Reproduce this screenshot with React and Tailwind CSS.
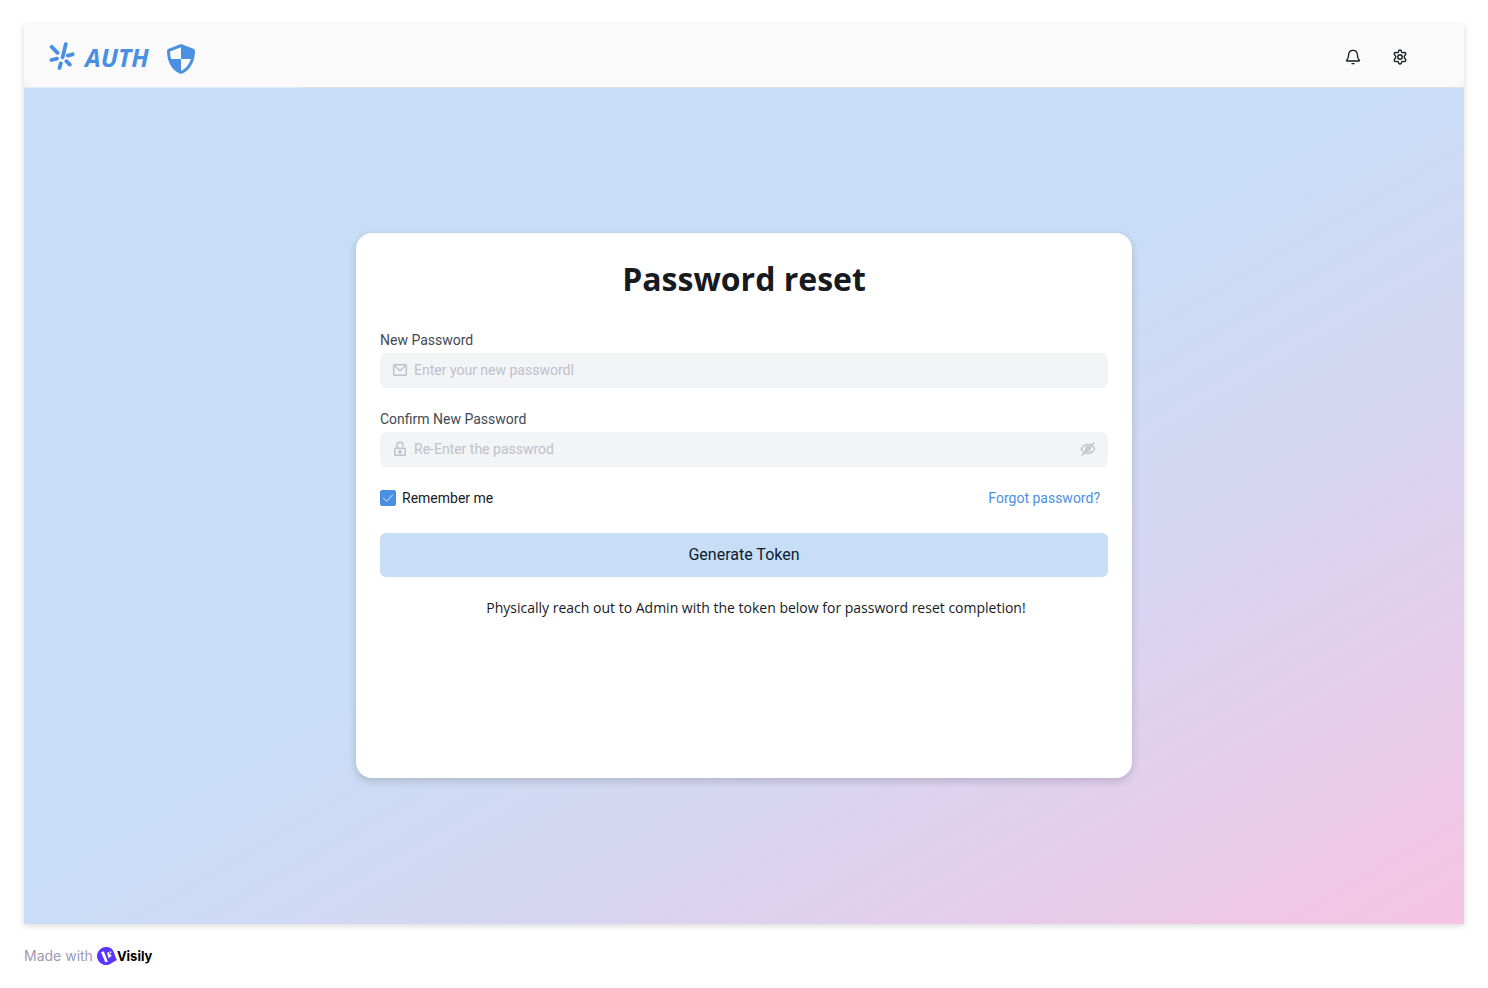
import { useState } from "react";

const openSans = "font-['Open_Sans',sans-serif]";

function SparkLogo() {
  return (
    <svg width="26" height="30" viewBox="0 0 26 30" fill="none" stroke="currentColor" strokeWidth="3.8" strokeLinecap="round" aria-hidden="true">
      <path d="M2.700 4.800 8.600 10.800M16.800 2.200 13.600 15.400M18.800 13.600l4.800-1.300M2.500 18l5.500-1.400M11.800 21.400l-1.300 4.600M17.400 19.200l3.400 3.400" />
    </svg>
  );
}

function ShieldLogo() {
  return (
    <svg width="28" height="30" viewBox="0 0 28 30" aria-hidden="true">
      <path
        fill="currentColor"
        fillRule="evenodd"
        d="M14 0 26.3 4.8C27.3 5.2 28 6 28 7c0 9.500-4 18.500-12.500 22.500a3.500 3.500 0 0 1-3 0C4 25.500 0 16.500 0 7c0-1 .7-1.800 1.700-2.200zM14 3.200 3 7.400c0 2.800.4 5.300 1.200 7.600H14zM14 15v12c5.200-2.600 8.400-7 9.900-12z"
      />
    </svg>
  );
}

function Icon({ size = 16, width = 1.5, children, className = "" }) {
  return (
    <svg width={size} height={size} viewBox="0 0 16 16" fill="none" stroke="currentColor" strokeWidth={width} strokeLinecap="round" strokeLinejoin="round" className={className} aria-hidden="true">
      {children}
    </svg>
  );
}

function Bell() {
  return (
    <Icon width={1.3}>
      <path d="M8 1.300c2.700 0 4.300 2 4.400 4.500.1 2.700.7 4.400 1.900 5.200.5.400.3 1-.3 1H2c-.6 0-.8-.6-.3-1 1.200-.8 1.800-2.500 1.900-5.200C3.700 3.300 5.300 1.300 8 1.300zM7 14.700h2" />
    </Icon>
  );
}

function Gear() {
  return (
    <Icon width={1.4}>
      <path d="M6.900 1.500c.3-.6 1.900-.6 2.200 0l.7 1.600c.2.400.6.600 1 .500l1.800-.2c.7 0 1.400 1.300 1.100 1.900l-1.100 1.500c-.3.400-.3 2 0 2.400l1.100 1.500c.3.600-.4 1.900-1.100 1.900l-1.800-.2c-.4-.1-.8.1-1 .5l-.7 1.600c-.3.600-1.900.6-2.200 0l-.7-1.600c-.2-.4-.6-.6-1-.5l-1.800.2c-.7 0-1.400-1.300-1.100-1.900l1.100-1.500c.3-.4.3-2 0-2.400L2.300 5.300c-.3-.6.4-1.900 1.100-1.900l1.800.2c.4.100.8-.1 1-.5z" />
      <circle cx="8" cy="8" r="2.200" />
    </Icon>
  );
}

function Mail() {
  return (
    <Icon>
      <rect x="1.700" y="2.700" width="12.600" height="10.600" rx="0.800" />
      <path d="m3.200 4.300 4.800 4.400 4.800-4.400" />
    </Icon>
  );
}

function Lock() {
  return (
    <Icon>
      <rect x="2.700" y="7.200" width="10.600" height="7" rx="0.800" />
      <path d="M5 7V4.300a3 3 0 0 1 6 0V5" />
      <circle cx="8" cy="10.700" r="1.100" fill="currentColor" />
    </Icon>
  );
}

function EyeOff() {
  return (
    <Icon width={1.400}>
      <path d="M1.300 8C2.700 5.200 5.100 3.500 8 3.500s5.300 1.700 6.700 4.500c-1.400 2.800-3.800 4.500-6.700 4.500S2.700 10.800 1.300 8zM2 14 14 2" />
      <circle cx="8" cy="8" r="2.300" />
    </Icon>
  );
}

function Field({ id, label, placeholder, icon, action }) {
  return (
    <div>
      <label htmlFor={id} className="block text-sm leading-[22px] text-[#424955]">{label}</label>
      <div className="mt-0.5 flex h-[35px] items-center gap-1.5 rounded-md bg-[#f3f4f6] px-3 text-[#bdc1ca]">
        {icon}
        <input id={id} placeholder={placeholder} className="min-w-0 flex-1 bg-transparent text-sm leading-[22px] text-[#171a1f] outline-none placeholder:text-[#bdc1ca]" />
        {action}
      </div>
    </div>
  );
}

export default function App() {
  const [remember, setRemember] = useState(true);
  return (
    <div className="min-h-screen bg-white px-6 pt-6 font-[Roboto,sans-serif]">
      <div className="flex min-h-[calc(100vh-88px)] flex-col shadow-[0_2px_6px_rgba(23,26,31,0.16)]">
        <div className="bg-[#f6f6f8]">
          <header className="flex h-[63px] items-center rounded-b-2xl bg-[#fafafb] pt-0.5 pr-14 pl-[25px]">
            <div className="flex items-center text-[#4a90e2]">
              <SparkLogo />
              <span className={`ml-2.5 text-[25px] leading-9 font-bold italic ${openSans}`}>AUTH</span>
              <span className="mt-1 ml-[18px]"><ShieldLogo /></span>
            </div>
            <div className="ml-auto flex gap-[31px] text-[#171a1f]">
              <button type="button" aria-label="Notifications"><Bell /></button>
              <button type="button" aria-label="Settings"><Gear /></button>
            </div>
          </header>
          <div className="flex h-px">
            <div className="w-[276px] bg-[#e1ecf8]" />
            <div className="flex-1 bg-[#dee1e6]" />
          </div>
        </div>
        <main className="flex flex-1 items-center justify-center bg-linear-to-br from-[#c8def6] from-48% via-[#dad3f0] via-72% to-[#f5c4e3] px-6 pt-6 pb-[26px]">
          <form onSubmit={(e) => e.preventDefault()} className="min-h-[545px] w-full max-w-[776px] rounded-2xl bg-white px-6 pt-[22px] pb-6 shadow-[0_3px_8px_rgba(23,26,31,0.18)]">
            <h1 className={`text-center text-[32px] leading-[48px] font-bold text-[#171a1f] ${openSans}`}>Password reset</h1>
            <div className="mt-[26px] flex flex-col gap-5">
              <Field id="new-password" label="New Password" placeholder="Enter your new passwordl" icon={<Mail />} />
              <Field
                id="confirm-password"
                label="Confirm New Password"
                placeholder="Re-Enter the passwrod"
                icon={<Lock />}
                action={<button type="button" aria-label="Show password"><EyeOff /></button>}
              />
            </div>
            <div className="mt-5 flex items-center justify-between pr-2 text-sm leading-[22px]">
              <label className="flex items-center gap-1.5 text-[#171a1f]">
                <span className="grid size-4">
                  <input type="checkbox" checked={remember} onChange={(e) => setRemember(e.target.checked)} className="peer col-start-1 row-start-1 size-4 appearance-none rounded-xs border border-[#4a90e2] checked:bg-[#4a90e2]" />
                  <Icon width={0.8} className="pointer-events-none col-start-1 row-start-1 text-white opacity-0 peer-checked:opacity-100">
                    <path d="m3.500 8.300 3 3 6-6.300" />
                  </Icon>
                </span>
                Remember me
              </label>
              <a href="#forgot" className="text-[#4a90e2]">Forgot password?</a>
            </div>
            <button type="submit" className="mt-6 h-11 w-full rounded-md bg-[#c8def6] text-base text-[#0a1d33]">Generate Token</button>
            <p className={`mt-5 pl-6 text-center text-sm leading-[22px] text-[#171a1f] ${openSans}`}>
              Physically reach out to Admin with the token below for password reset completion!
            </p>
          </form>
        </main>
      </div>
      <footer className="flex h-16 items-center text-sm text-[#9c98b3] font-[Inter,sans-serif]">
        Made with
        <a href="#visily" className="ml-1 flex items-center text-[13px] font-bold text-black">
          <svg width="20" height="18" viewBox="0 0 20 18" aria-hidden="true">
            <path fill="#5b34ff" d="M9 0c4.500 0 7.500 2.700 8.400 6.500.6 2.600 1.400 4.700 2.600 6.500-2.300 1.300-4.300 2.200-6 3.500A9 9 0 1 1 9 0z" />
            <path fill="#fff" d="M4 5.300 6.800 4.300 10.800 14.500 8.300 15.300zM10 5.800l2-.8.8 2.700 1.300-.5.300 1.800-2.800 2.200zM12.700 4.800l1.300-.5.4 1.400-1.200.5z" />
          </svg>
          Visily
        </a>
      </footer>
    </div>
  );
}
